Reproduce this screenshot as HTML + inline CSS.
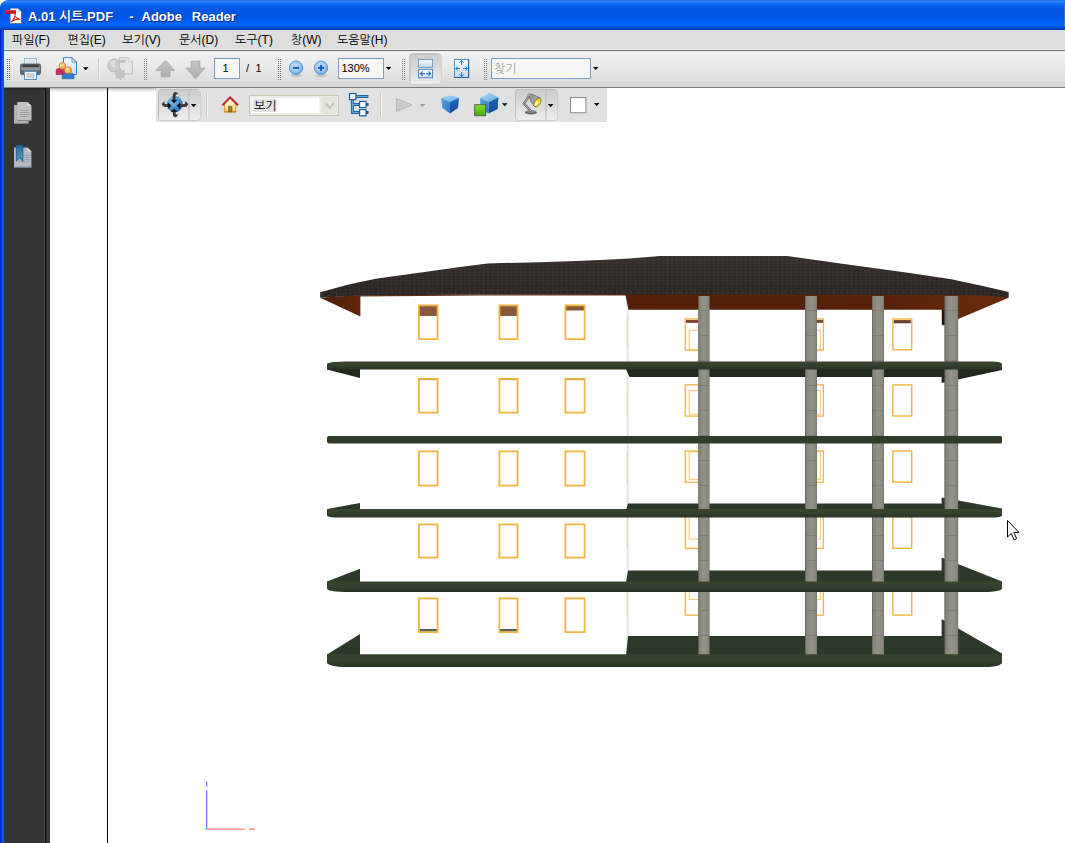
<!DOCTYPE html>
<html><head><meta charset="utf-8"><title>A.01 PDF - Adobe Reader</title>
<style>
html,body{margin:0;padding:0;background:#fff;}
body{width:1065px;height:843px;overflow:hidden;position:relative;font-family:"Liberation Sans",sans-serif;}
.a{position:absolute;}
svg{position:absolute;left:0;top:0;overflow:visible;}

#title{left:0;top:0;width:1065px;height:30px;background:linear-gradient(180deg,#0a50d8 0px,#3a8cf8 1px,#2a84fb 2px,#1272f4 3px,#0564ec 5px,#0058e4 8px,#0054e0 12px,#0055e6 17px,#005cf0 21px,#0465f8 24px,#0460ee 26px,#0050d4 28px,#0040b4 29px,#003aa8 30px);}
#tl{left:0;top:0;width:8px;height:8px;}
#lb{left:0;top:30px;width:4px;height:813px;background:linear-gradient(90deg,#001cd0 0,#0022d6 1px,#0a4cee 2px,#0c58f4 3px,#0a50ea 4px);}
#menu{left:4px;top:30px;width:1061px;height:19px;background:#dedede;}
#menul{left:4px;top:49px;width:1061px;height:1px;background:#efefef;}
#menud{left:4px;top:50px;width:1061px;height:1px;background:#6f6f6f;}
#tb{left:4px;top:51px;width:1061px;height:36px;background:linear-gradient(180deg,#f1f1f1 0,#ebebeb 40%,#dcdcdc 85%,#d4d4d4 100%);}
#tbd{left:4px;top:87px;width:1061px;height:1px;background:#7c7c7c;}
#side{left:4px;top:88px;width:41px;height:755px;background:linear-gradient(180deg,#242424 0,#303030 2px,#343434 4px);}
#sideh{left:44px;top:90px;width:1px;height:753px;background:#4e4e4e;}
#sidel{left:45px;top:88px;width:1px;height:755px;background:#000;}
#sides{left:46px;top:88px;width:4px;height:755px;background:#363636;}
#shadow{left:50px;top:88px;width:106px;height:4px;background:linear-gradient(180deg,rgba(0,0,0,.32),rgba(0,0,0,.12) 45%,rgba(0,0,0,0));}
#pl{left:107px;top:88px;width:1px;height:755px;background:#000;}
#t3{left:156px;top:88px;width:451px;height:34px;background:#e1e1e1;}
#tr{left:1064px;top:5px;width:1px;height:21px;background:#4a72c8;}
.tx{font:11px/13px "Liberation Sans",sans-serif;color:#000;white-space:nowrap;}
</style></head><body>

<div class="a" id="title"></div>
<svg class="a" id="tl" width="8" height="8"><path d="M0 0H7C3 1 1 3 0 7Z" fill="#fff"/></svg>
<div class="a" id="lb"></div>
<div class="a" id="menu"></div><div class="a" id="menul"></div><div class="a" id="menud"></div>
<div class="a" id="tb"></div><div class="a" id="tbd"></div>
<div class="a" id="side"></div><div class="a" id="sideh"></div><div class="a" id="sidel"></div><div class="a" id="sides"></div>
<div class="a" id="pl"></div>
<div class="a" id="shadow"></div>
<div class="a" id="t3"></div><div class="a" id="tr"></div>
<svg width="1065" height="60"><g role="heading" aria-label="A.01 시트.PDF - Adobe Reader" font-family='"Liberation Sans","NanumGothic","Noto Sans CJK KR",sans-serif' font-size="13" font-weight="bold"><text y="22" fill="#0a2a8c"><tspan x="29">A.01 시트.PDF</tspan><tspan x="130.2">-</tspan><tspan x="142.5">Adobe</tspan><tspan x="192.8">Reader</tspan></text><text y="21" fill="#ffffff"><tspan x="28">A.01 시트.PDF</tspan><tspan x="129.2">-</tspan><tspan x="141.5">Adobe</tspan><tspan x="191.8">Reader</tspan></text></g><g font-family='"Liberation Sans","NanumGothic","Noto Sans CJK KR",sans-serif' font-size="12" fill="#000"><g role="menuitem" aria-label="파일(F)"><text x="12" y="44">파일(F)</text></g><g role="menuitem" aria-label="편집(E)"><text x="67.3" y="44">편집(E)</text></g><g role="menuitem" aria-label="보기(V)"><text x="122.3" y="44">보기(V)</text></g><g role="menuitem" aria-label="문서(D)"><text x="179" y="44">문서(D)</text></g><g role="menuitem" aria-label="도구(T)"><text x="235" y="44">도구(T)</text></g><g role="menuitem" aria-label="창(W)"><text x="291" y="44">창(W)</text></g><g role="menuitem" aria-label="도움말(H)"><text x="337" y="44">도움말(H)</text></g></g></svg>

<svg width="1065" height="843"><defs>
<linearGradient id="colg" x1="0" x2="1" y1="0" y2="0"><stop offset="0" stop-color="#5c5c54"/><stop offset=".12" stop-color="#85857c"/><stop offset=".5" stop-color="#939389"/><stop offset=".9" stop-color="#87877e"/><stop offset="1" stop-color="#74746c"/></linearGradient>
<linearGradient id="roofg" x1="0" x2="0" y1="0" y2="1"><stop offset="0" stop-color="#383230"/><stop offset=".5" stop-color="#322c2a"/><stop offset="1" stop-color="#2c2625"/></linearGradient>
<linearGradient id="brg" x1="0" x2="1" y1="0" y2="0"><stop offset="0" stop-color="#4c1c06"/><stop offset="1" stop-color="#63270a"/></linearGradient>
<linearGradient id="brg2" x1="0" x2="1" y1="0" y2="0"><stop offset="0" stop-color="#521f07"/><stop offset=".7" stop-color="#58220a"/><stop offset="1" stop-color="#6c2c0d"/></linearGradient>
<linearGradient id="frg" x1="0" x2="0" y1="0" y2="1"><stop offset="0" stop-color="#37452f"/><stop offset=".55" stop-color="#33402c"/><stop offset="1" stop-color="#293324"/></linearGradient>
<pattern id="shingle" width="4.6" height="3" patternUnits="userSpaceOnUse"><rect x="0" y="0" width="1" height="3" fill="#fff" opacity=".035"/><rect x="0" y="0" width="4.6" height=".8" fill="#000" opacity=".10"/></pattern>
<clipPath id="roofclip"><path id="roofp" d="M320.2 292.2L347.6 284.7L375.7 278.7L422.7 272.2L460.2 266.9L487.5 263.4L530 262.4L570 261.3L600 260L630 258.5L660 256H787L847.6 264.6L906.2 272.5L951.3 279.3L982.8 286.1L1008.7 292.1V297.8L985 295.6L940 294.8L780 294.3L480 294.5L360 295.6L320.2 297.8Z"/></clipPath>
</defs><rect x="626.6" y="300" width="2.2" height="356" fill="#e6e6e6"/><rect x="628.6" y="300" width="0.8" height="356" fill="#f3f3f3"/><rect x="419" y="306.0" width="18.5" height="10" fill="#87583c"/><rect x="418.9" y="305.4" width="18.7" height="33.7" fill="none" stroke="#f2b441" stroke-width="1.8"/><rect x="499.5" y="306.0" width="18.0" height="10" fill="#87583c"/><rect x="499.4" y="305.4" width="18.2" height="33.7" fill="none" stroke="#f2b441" stroke-width="1.8"/><rect x="565.5" y="306.0" width="19.0" height="4.5" fill="#87583c"/><rect x="565.4" y="305.4" width="19.2" height="33.7" fill="none" stroke="#f2b441" stroke-width="1.8"/><rect x="419" y="378.5" width="18.5" height="1.6" fill="#6a5a48" opacity=".8"/><rect x="418.9" y="378.9" width="18.7" height="33.7" fill="none" stroke="#f2b441" stroke-width="1.8"/><rect x="499.5" y="378.5" width="18.0" height="1.6" fill="#6a5a48" opacity=".8"/><rect x="499.4" y="378.9" width="18.2" height="33.7" fill="none" stroke="#f2b441" stroke-width="1.8"/><rect x="565.5" y="378.5" width="19.0" height="1.6" fill="#6a5a48" opacity=".8"/><rect x="565.4" y="378.9" width="19.2" height="33.7" fill="none" stroke="#f2b441" stroke-width="1.8"/><rect x="418.9" y="451.4" width="18.7" height="34.2" fill="none" stroke="#f2b441" stroke-width="1.8"/><rect x="499.4" y="451.4" width="18.2" height="34.2" fill="none" stroke="#f2b441" stroke-width="1.8"/><rect x="565.4" y="451.4" width="19.2" height="34.2" fill="none" stroke="#f2b441" stroke-width="1.8"/><rect x="418.9" y="524.4" width="18.7" height="33.2" fill="none" stroke="#f2b441" stroke-width="1.8"/><rect x="499.4" y="524.4" width="18.2" height="33.2" fill="none" stroke="#f2b441" stroke-width="1.8"/><rect x="565.4" y="524.4" width="19.2" height="33.2" fill="none" stroke="#f2b441" stroke-width="1.8"/><rect x="419" y="629" width="18.5" height="2.6" fill="#566060"/><rect x="418.9" y="598.4" width="18.7" height="33.7" fill="none" stroke="#f2b441" stroke-width="1.8"/><rect x="499.5" y="629" width="18.0" height="2.6" fill="#566060"/><rect x="499.4" y="598.4" width="18.2" height="33.7" fill="none" stroke="#f2b441" stroke-width="1.8"/><rect x="565.4" y="598.4" width="19.2" height="33.7" fill="none" stroke="#f2b441" stroke-width="1.8"/><rect x="689.2" y="330.3" width="16" height="19.69999999999999" fill="none" stroke="#f6cc7c" stroke-width="1.1"/><rect x="808" y="330.3" width="12.4" height="19.69999999999999" fill="none" stroke="#f6cc7c" stroke-width="1.1"/><rect x="685.2" y="318.90000000000003" width="20" height="30.99999999999999" fill="none" stroke="#f2b441" stroke-width="1.3"/><rect x="808" y="318.90000000000003" width="15.4" height="30.99999999999999" fill="none" stroke="#f2b441" stroke-width="1.3"/><rect x="892.9" y="319.0" width="18.8" height="30.79999999999999" fill="none" stroke="#f2b441" stroke-width="1.4"/><rect x="686" y="319.90000000000003" width="12" height="3" fill="#7a4a30"/><rect x="817" y="319.90000000000003" width="6" height="3" fill="#7a4a30"/><rect x="893.8" y="320.1" width="17" height="3.2" fill="#6e4028"/><rect x="689.2" y="390.3" width="16" height="23.899999999999977" fill="none" stroke="#f6cc7c" stroke-width="1.1"/><rect x="808" y="390.3" width="12.4" height="23.899999999999977" fill="none" stroke="#f6cc7c" stroke-width="1.1"/><rect x="685.2" y="384.8" width="20" height="31.3" fill="none" stroke="#f2b441" stroke-width="1.3"/><rect x="808" y="384.8" width="15.4" height="31.3" fill="none" stroke="#f2b441" stroke-width="1.3"/><rect x="892.9" y="384.9" width="18.8" height="31.1" fill="none" stroke="#f2b441" stroke-width="1.4"/><rect x="689.2" y="451.9" width="16" height="27.400000000000034" fill="none" stroke="#f6cc7c" stroke-width="1.1"/><rect x="808" y="451.9" width="12.4" height="27.400000000000034" fill="none" stroke="#f6cc7c" stroke-width="1.1"/><rect x="685.2" y="451.0" width="20" height="31.200000000000035" fill="none" stroke="#f2b441" stroke-width="1.3"/><rect x="808" y="451.0" width="15.4" height="31.200000000000035" fill="none" stroke="#f2b441" stroke-width="1.3"/><rect x="892.9" y="451.09999999999997" width="18.8" height="31.000000000000036" fill="none" stroke="#f2b441" stroke-width="1.4"/><rect x="689.2" y="512.5" width="16" height="26.600000000000023" fill="none" stroke="#f6cc7c" stroke-width="1.1"/><rect x="808" y="512.5" width="12.4" height="26.600000000000023" fill="none" stroke="#f6cc7c" stroke-width="1.1"/><rect x="685.2" y="516.6" width="20" height="31.8" fill="none" stroke="#f2b441" stroke-width="1.3"/><rect x="808" y="516.6" width="15.4" height="31.8" fill="none" stroke="#f2b441" stroke-width="1.3"/><rect x="892.9" y="516.7" width="18.8" height="31.6" fill="none" stroke="#f2b441" stroke-width="1.4"/><rect x="689.2" y="572.5" width="16" height="27" fill="none" stroke="#f6cc7c" stroke-width="1.1"/><rect x="808" y="572.5" width="12.4" height="27" fill="none" stroke="#f6cc7c" stroke-width="1.1"/><rect x="685.2" y="583.6" width="20" height="31.599999999999955" fill="none" stroke="#f2b441" stroke-width="1.3"/><rect x="808" y="583.6" width="15.4" height="31.599999999999955" fill="none" stroke="#f2b441" stroke-width="1.3"/><rect x="892.9" y="583.7" width="18.8" height="31.399999999999956" fill="none" stroke="#f2b441" stroke-width="1.4"/><rect x="626.8" y="318" width="1" height="32" fill="#f2b441" opacity=".35"/><rect x="626.8" y="385" width="1" height="32" fill="#f2b441" opacity=".35"/><rect x="626.8" y="451" width="1" height="32" fill="#f2b441" opacity=".35"/><rect x="626.8" y="517" width="1" height="32" fill="#f2b441" opacity=".35"/><rect x="626.8" y="586" width="1" height="30" fill="#f2b441" opacity=".35"/><path d="M327 369.4L360 378V369H626L629.5 377H941.6V383L1002 370V366H327Z" fill="#212a1c"/><path d="M327 509L360 503V510H626L628 503.5H941.6V497.6L1002 508.6V512H327Z" fill="#2d3928"/><path d="M327 581.6L360 568.8V582.6H626L628 570.6H941.6V557.6L1002 581.6V584.6H327Z" fill="#2d3928"/><path d="M327 654.4L360 634V655.4H626L628 636H941.6V619L1002 653.6V657.4H327Z" fill="#2d3928"/><polygon points="320.2,297.8 360.4,295 360.4,316.4" fill="url(#brg)" /><polygon points="625.3,294 1000,294 1008.7,297.8 944,325 944,309.7 628.4,309.7" fill="url(#brg2)" /><rect x="941.8" y="309.4" width="2.6" height="15.8" fill="#2a1206"/><rect x="698.2" y="296" width="11.399999999999977" height="360" fill="url(#colg)"/><rect x="699.2" y="310" width="9.899999999999977" height="0.9" fill="#66665e" opacity=".4"/><rect x="699.2" y="335" width="9.899999999999977" height="0.9" fill="#66665e" opacity=".4"/><rect x="699.2" y="360" width="9.899999999999977" height="0.9" fill="#66665e" opacity=".4"/><rect x="699.2" y="385" width="9.899999999999977" height="0.9" fill="#66665e" opacity=".4"/><rect x="699.2" y="410" width="9.899999999999977" height="0.9" fill="#66665e" opacity=".4"/><rect x="699.2" y="435" width="9.899999999999977" height="0.9" fill="#66665e" opacity=".4"/><rect x="699.2" y="460" width="9.899999999999977" height="0.9" fill="#66665e" opacity=".4"/><rect x="699.2" y="485" width="9.899999999999977" height="0.9" fill="#66665e" opacity=".4"/><rect x="699.2" y="510" width="9.899999999999977" height="0.9" fill="#66665e" opacity=".4"/><rect x="699.2" y="535" width="9.899999999999977" height="0.9" fill="#66665e" opacity=".4"/><rect x="699.2" y="560" width="9.899999999999977" height="0.9" fill="#66665e" opacity=".4"/><rect x="699.2" y="585" width="9.899999999999977" height="0.9" fill="#66665e" opacity=".4"/><rect x="699.2" y="610" width="9.899999999999977" height="0.9" fill="#66665e" opacity=".4"/><rect x="699.2" y="635" width="9.899999999999977" height="0.9" fill="#66665e" opacity=".4"/><rect x="805" y="296" width="12" height="360" fill="url(#colg)"/><rect x="806" y="310" width="10.5" height="0.9" fill="#66665e" opacity=".4"/><rect x="806" y="335" width="10.5" height="0.9" fill="#66665e" opacity=".4"/><rect x="806" y="360" width="10.5" height="0.9" fill="#66665e" opacity=".4"/><rect x="806" y="385" width="10.5" height="0.9" fill="#66665e" opacity=".4"/><rect x="806" y="410" width="10.5" height="0.9" fill="#66665e" opacity=".4"/><rect x="806" y="435" width="10.5" height="0.9" fill="#66665e" opacity=".4"/><rect x="806" y="460" width="10.5" height="0.9" fill="#66665e" opacity=".4"/><rect x="806" y="485" width="10.5" height="0.9" fill="#66665e" opacity=".4"/><rect x="806" y="510" width="10.5" height="0.9" fill="#66665e" opacity=".4"/><rect x="806" y="535" width="10.5" height="0.9" fill="#66665e" opacity=".4"/><rect x="806" y="560" width="10.5" height="0.9" fill="#66665e" opacity=".4"/><rect x="806" y="585" width="10.5" height="0.9" fill="#66665e" opacity=".4"/><rect x="806" y="610" width="10.5" height="0.9" fill="#66665e" opacity=".4"/><rect x="806" y="635" width="10.5" height="0.9" fill="#66665e" opacity=".4"/><rect x="872" y="296" width="12" height="360" fill="url(#colg)"/><rect x="873" y="310" width="10.5" height="0.9" fill="#66665e" opacity=".4"/><rect x="873" y="335" width="10.5" height="0.9" fill="#66665e" opacity=".4"/><rect x="873" y="360" width="10.5" height="0.9" fill="#66665e" opacity=".4"/><rect x="873" y="385" width="10.5" height="0.9" fill="#66665e" opacity=".4"/><rect x="873" y="410" width="10.5" height="0.9" fill="#66665e" opacity=".4"/><rect x="873" y="435" width="10.5" height="0.9" fill="#66665e" opacity=".4"/><rect x="873" y="460" width="10.5" height="0.9" fill="#66665e" opacity=".4"/><rect x="873" y="485" width="10.5" height="0.9" fill="#66665e" opacity=".4"/><rect x="873" y="510" width="10.5" height="0.9" fill="#66665e" opacity=".4"/><rect x="873" y="535" width="10.5" height="0.9" fill="#66665e" opacity=".4"/><rect x="873" y="560" width="10.5" height="0.9" fill="#66665e" opacity=".4"/><rect x="873" y="585" width="10.5" height="0.9" fill="#66665e" opacity=".4"/><rect x="873" y="610" width="10.5" height="0.9" fill="#66665e" opacity=".4"/><rect x="873" y="635" width="10.5" height="0.9" fill="#66665e" opacity=".4"/><rect x="944.4" y="296" width="13.800000000000068" height="360" fill="url(#colg)"/><rect x="945.4" y="310" width="12.300000000000068" height="0.9" fill="#66665e" opacity=".4"/><rect x="945.4" y="335" width="12.300000000000068" height="0.9" fill="#66665e" opacity=".4"/><rect x="945.4" y="360" width="12.300000000000068" height="0.9" fill="#66665e" opacity=".4"/><rect x="945.4" y="385" width="12.300000000000068" height="0.9" fill="#66665e" opacity=".4"/><rect x="945.4" y="410" width="12.300000000000068" height="0.9" fill="#66665e" opacity=".4"/><rect x="945.4" y="435" width="12.300000000000068" height="0.9" fill="#66665e" opacity=".4"/><rect x="945.4" y="460" width="12.300000000000068" height="0.9" fill="#66665e" opacity=".4"/><rect x="945.4" y="485" width="12.300000000000068" height="0.9" fill="#66665e" opacity=".4"/><rect x="945.4" y="510" width="12.300000000000068" height="0.9" fill="#66665e" opacity=".4"/><rect x="945.4" y="535" width="12.300000000000068" height="0.9" fill="#66665e" opacity=".4"/><rect x="945.4" y="560" width="12.300000000000068" height="0.9" fill="#66665e" opacity=".4"/><rect x="945.4" y="585" width="12.300000000000068" height="0.9" fill="#66665e" opacity=".4"/><rect x="945.4" y="610" width="12.300000000000068" height="0.9" fill="#66665e" opacity=".4"/><rect x="945.4" y="635" width="12.300000000000068" height="0.9" fill="#66665e" opacity=".4"/><path d="M320.2 292.2L347.6 284.7L375.7 278.7L422.7 272.2L460.2 266.9L487.5 263.4L530 262.4L570 261.3L600 260L630 258.5L660 256H787L847.6 264.6L906.2 272.5L951.3 279.3L982.8 286.1L1008.7 292.1V297.8L985 295.6L940 294.8L780 294.3L480 294.5L360 295.6L320.2 297.8Z" fill="url(#roofg)"/><rect x="318" y="254" width="694" height="45" fill="url(#shingle)" clip-path="url(#roofclip)"/><path d="M322 295.2L360 293.2L480 292.2L780 292L940 292.4L1004 294.6" fill="none" stroke="#4a4240" stroke-width="1.2" stroke-dasharray="1.6 5.4" opacity=".7"/><path d="M360 295.2L480 294.2L626 294.1V295.4L480 295.5L360 296.4Z" fill="#5a2a12"/><path d="M327 364.0Q327.2 361.79999999999995 345 361.4H992Q1001.6 361.7 1002 364.0V369.5H327Z" fill="url(#frg)"/><path d="M329 436H1000.5Q1002 436 1002 437.5V441.9Q1002 443.4 1000.5 443.4H329Q327 443.4 327 441.6V437.8Q327 436 329 436Z" fill="#303c2a"/><path d="M327 509H1002V515.6Q1001.6 517.2 995 517.6H335Q327.4 517.2 327 515.6Z" fill="url(#frg)"/><path d="M327 581.6H1002V588.6Q1001.6 591.6 988 592H344Q327.4 591.6 327 588.6Z" fill="url(#frg)"/><path d="M327 654.2H1002V662.4Q1001.6 666.6 985 667H348Q327.4 666.6 327 662.4Z" fill="url(#frg)"/><rect x="206" y="781.5" width="1.3" height="5" fill="#7878ff"/><rect x="206" y="790.5" width="1.3" height="38.5" fill="#7878ff"/><rect x="207.5" y="828.6" width="37.5" height="1.1" fill="#ff6a6a"/><rect x="249" y="828.6" width="6" height="1.1" fill="#ff6a6a"/><rect x="204.8" y="828.4" width="3.4" height="1.4" fill="#60f060"/><path d="M1007.5 520.5V537L1011.3 533.4L1014 539.8L1016.6 538.7L1013.9 532.4H1019Z" fill="#fff" stroke="#000" stroke-width="1" stroke-linejoin="miter"/></svg>
<svg width="1065" height="200"><defs>
<linearGradient id="gBtn" x1="0" x2="0" y1="0" y2="1"><stop offset="0" stop-color="#cbcbcb"/><stop offset=".5" stop-color="#dcdcdc"/><stop offset="1" stop-color="#eeeeee"/></linearGradient>
<radialGradient id="gZoom" cx=".45" cy=".4" r=".65"><stop offset="0" stop-color="#cfe6f8"/><stop offset=".55" stop-color="#9cc8ee"/><stop offset="1" stop-color="#5e9fe0"/></radialGradient>
<linearGradient id="gPg" x1="0" x2="0" y1="0" y2="1"><stop offset="0" stop-color="#fbfdff"/><stop offset="1" stop-color="#c4d8ec"/></linearGradient>
<linearGradient id="gCubeT" x1="0" x2="1" y1="0" y2="1"><stop offset="0" stop-color="#a8d4f4"/><stop offset="1" stop-color="#6cb0e4"/></linearGradient>
<linearGradient id="gCubeL" x1="0" x2="1" y1="0" y2="1"><stop offset="0" stop-color="#5ca4e0"/><stop offset="1" stop-color="#2a78c8"/></linearGradient>
<linearGradient id="gCubeR" x1="0" x2="0" y1="0" y2="1"><stop offset="0" stop-color="#2468b8"/><stop offset="1" stop-color="#124c98"/></linearGradient>
<linearGradient id="gGreen" x1="0" x2="0" y1="0" y2="1"><stop offset="0" stop-color="#86ea1c"/><stop offset="1" stop-color="#44a808"/></linearGradient>
<linearGradient id="gHouse" x1="0" x2="0" y1="0" y2="1"><stop offset="0" stop-color="#fff6c8"/><stop offset="1" stop-color="#f6cc58"/></linearGradient>
<radialGradient id="gBall" cx=".35" cy=".3" r=".8"><stop offset="0" stop-color="#8cc4ec"/><stop offset=".5" stop-color="#4a94cc"/><stop offset="1" stop-color="#2a6ca8"/></radialGradient>
<radialGradient id="gHead" cx=".4" cy=".35" r=".7"><stop offset="0" stop-color="#ffe0a8"/><stop offset=".6" stop-color="#f8b45c"/><stop offset="1" stop-color="#d88830"/></radialGradient>
<linearGradient id="gRib" x1="0" x2="0" y1="0" y2="1"><stop offset="0" stop-color="#2c6c9c"/><stop offset="1" stop-color="#5a94bc"/></linearGradient>
<linearGradient id="gArr" x1="0" x2="0" y1="0" y2="1"><stop offset="0" stop-color="#c4c4c4"/><stop offset="1" stop-color="#b0b0b0"/></linearGradient>
</defs><rect x="7" y="59" width="1" height="1" fill="#7e7e7e"/><rect x="9" y="59" width="1" height="1" fill="#7e7e7e"/><rect x="7" y="61" width="1" height="1" fill="#7e7e7e"/><rect x="9" y="61" width="1" height="1" fill="#7e7e7e"/><rect x="7" y="63" width="1" height="1" fill="#7e7e7e"/><rect x="9" y="63" width="1" height="1" fill="#7e7e7e"/><rect x="7" y="65" width="1" height="1" fill="#7e7e7e"/><rect x="9" y="65" width="1" height="1" fill="#7e7e7e"/><rect x="7" y="67" width="1" height="1" fill="#7e7e7e"/><rect x="9" y="67" width="1" height="1" fill="#7e7e7e"/><rect x="7" y="69" width="1" height="1" fill="#7e7e7e"/><rect x="9" y="69" width="1" height="1" fill="#7e7e7e"/><rect x="7" y="71" width="1" height="1" fill="#7e7e7e"/><rect x="9" y="71" width="1" height="1" fill="#7e7e7e"/><rect x="7" y="73" width="1" height="1" fill="#7e7e7e"/><rect x="9" y="73" width="1" height="1" fill="#7e7e7e"/><rect x="7" y="75" width="1" height="1" fill="#7e7e7e"/><rect x="9" y="75" width="1" height="1" fill="#7e7e7e"/><rect x="7" y="77" width="1" height="1" fill="#7e7e7e"/><rect x="9" y="77" width="1" height="1" fill="#7e7e7e"/><rect x="7" y="79" width="1" height="1" fill="#7e7e7e"/><rect x="9" y="79" width="1" height="1" fill="#7e7e7e"/><g>
<rect x="24.5" y="58.5" width="12" height="7" fill="#eef1f3" stroke="#86c2d6"/>
<rect x="26" y="60" width="9" height="4" fill="#e2e4e6"/>
<rect x="20.5" y="64" width="20" height="10.5" rx="1.2" fill="#74787c" stroke="#50545a" stroke-width=".8"/>
<rect x="22.5" y="64.6" width="16" height="2.6" fill="#3c4044"/>
<rect x="21.2" y="67.4" width="18.6" height="3.2" fill="#94989c"/>
<rect x="21.2" y="70.6" width="18.6" height="3.4" fill="#5e6266"/>
<rect x="24.5" y="71.5" width="12" height="8" fill="#f6f8fa" stroke="#5a94c4"/>
<rect x="26.5" y="73.6" width="8" height="1" fill="#a8acb0"/><rect x="26.5" y="75.6" width="8" height="1" fill="#a8acb0"/><rect x="26.5" y="77.4" width="8" height=".8" fill="#b8bcc0"/>
</g><g>
<path d="M63.5 57.7H72L76.5 62.2V74.5H63.5Z" fill="url(#gPg)" stroke="#3c7cc8"/>
<path d="M72 57.7V62.2H76.5Z" fill="#dceaf8" stroke="#3c7cc8" stroke-width=".8"/>
<path d="M56.2 74.6V70.6Q56.2 68.6 58.4 68.6H64.2Q66 68.6 66 70.6V74.6Z" fill="#c82c5c" stroke="#9c1c44" stroke-width=".6"/>
<circle cx="62.4" cy="66" r="3.4" fill="url(#gHead)" stroke="#b87838" stroke-width=".6"/>
<path d="M62.2 78.8V75.4Q62.2 73.4 64.4 73.4H71.8Q74 73.4 74 75.4V78.8Z" fill="#2c7ccc" stroke="#1c5ca4" stroke-width=".6"/>
<circle cx="68" cy="70.2" r="3.6" fill="url(#gHead)" stroke="#b87838" stroke-width=".6"/>
</g><path d="M82.9 67.2H88.5L85.7 70.3Z" fill="#000"/><rect x="98" y="58.5" width="1" height="21.5" fill="#cdc8b8"/><rect x="99" y="58.5" width="1" height="21.5" fill="#f4f4f4"/><g opacity=".9">
<circle cx="114.5" cy="65.5" r="6.6" fill="#c8c8c8" stroke="#b6b6b6"/>
<path d="M110 62Q113 59.5 116 61.5Q114 64 116 66.5Q113 69 111.5 66Z" fill="#dcdcdc"/>
<path d="M119.5 57.8H128.5L132.4 61.7V74H119.5Z" fill="#e6e6e6" stroke="#bcbcbc"/>
<path d="M128.5 57.8V61.7H132.4Z" fill="#f0f0f0" stroke="#c4c4c4" stroke-width=".7"/>
<rect x="118" y="60" width="7.5" height="2.8" fill="#bcbcbc"/>
<path d="M120.3 68.2L121.8 70.6L124.5 69.9L123.8 72.6L126.2 74L123.8 75.4L124.5 78.1L121.8 77.4L120.3 79.8L118.8 77.4L116.1 78.1L116.8 75.4L114.4 74L116.8 72.6L116.1 69.9L118.8 70.6Z" fill="#c0c0c0" stroke="#b2b2b2" stroke-width=".5"/>
</g><rect x="144" y="59" width="1" height="1" fill="#7e7e7e"/><rect x="146" y="59" width="1" height="1" fill="#7e7e7e"/><rect x="144" y="61" width="1" height="1" fill="#7e7e7e"/><rect x="146" y="61" width="1" height="1" fill="#7e7e7e"/><rect x="144" y="63" width="1" height="1" fill="#7e7e7e"/><rect x="146" y="63" width="1" height="1" fill="#7e7e7e"/><rect x="144" y="65" width="1" height="1" fill="#7e7e7e"/><rect x="146" y="65" width="1" height="1" fill="#7e7e7e"/><rect x="144" y="67" width="1" height="1" fill="#7e7e7e"/><rect x="146" y="67" width="1" height="1" fill="#7e7e7e"/><rect x="144" y="69" width="1" height="1" fill="#7e7e7e"/><rect x="146" y="69" width="1" height="1" fill="#7e7e7e"/><rect x="144" y="71" width="1" height="1" fill="#7e7e7e"/><rect x="146" y="71" width="1" height="1" fill="#7e7e7e"/><rect x="144" y="73" width="1" height="1" fill="#7e7e7e"/><rect x="146" y="73" width="1" height="1" fill="#7e7e7e"/><rect x="144" y="75" width="1" height="1" fill="#7e7e7e"/><rect x="146" y="75" width="1" height="1" fill="#7e7e7e"/><rect x="144" y="77" width="1" height="1" fill="#7e7e7e"/><rect x="146" y="77" width="1" height="1" fill="#7e7e7e"/><rect x="144" y="79" width="1" height="1" fill="#7e7e7e"/><rect x="146" y="79" width="1" height="1" fill="#7e7e7e"/><path d="M165.4 60.4L174.8 70.4H170V76.8H161.2V70.4H156Z" fill="url(#gArr)" stroke="#a6a6a6" stroke-width=".8"/><path d="M191.2 61.2H199.8V68.2H205L195.5 78.8L186 68.2H191.2Z" fill="url(#gArr)" stroke="#a6a6a6" stroke-width=".8"/><rect x="214.5" y="58.5" width="25" height="20" fill="#f6f6f6" stroke="#7a9cc6"/><rect x="278" y="59" width="1" height="1" fill="#7e7e7e"/><rect x="280" y="59" width="1" height="1" fill="#7e7e7e"/><rect x="278" y="61" width="1" height="1" fill="#7e7e7e"/><rect x="280" y="61" width="1" height="1" fill="#7e7e7e"/><rect x="278" y="63" width="1" height="1" fill="#7e7e7e"/><rect x="280" y="63" width="1" height="1" fill="#7e7e7e"/><rect x="278" y="65" width="1" height="1" fill="#7e7e7e"/><rect x="280" y="65" width="1" height="1" fill="#7e7e7e"/><rect x="278" y="67" width="1" height="1" fill="#7e7e7e"/><rect x="280" y="67" width="1" height="1" fill="#7e7e7e"/><rect x="278" y="69" width="1" height="1" fill="#7e7e7e"/><rect x="280" y="69" width="1" height="1" fill="#7e7e7e"/><rect x="278" y="71" width="1" height="1" fill="#7e7e7e"/><rect x="280" y="71" width="1" height="1" fill="#7e7e7e"/><rect x="278" y="73" width="1" height="1" fill="#7e7e7e"/><rect x="280" y="73" width="1" height="1" fill="#7e7e7e"/><rect x="278" y="75" width="1" height="1" fill="#7e7e7e"/><rect x="280" y="75" width="1" height="1" fill="#7e7e7e"/><rect x="278" y="77" width="1" height="1" fill="#7e7e7e"/><rect x="280" y="77" width="1" height="1" fill="#7e7e7e"/><rect x="278" y="79" width="1" height="1" fill="#7e7e7e"/><rect x="280" y="79" width="1" height="1" fill="#7e7e7e"/><ellipse cx="296.5" cy="75.6" rx="6" ry="1.6" fill="#000" opacity=".12"/><circle cx="296" cy="67.8" r="6.7" fill="url(#gZoom)" stroke="#5c98d8" stroke-width="1"/><rect x="293" y="66.9" width="6" height="2" fill="#1a5cb8"/><ellipse cx="321.5" cy="75.6" rx="6" ry="1.6" fill="#000" opacity=".12"/><circle cx="321" cy="67.8" r="6.7" fill="url(#gZoom)" stroke="#5c98d8" stroke-width="1"/><rect x="318" y="66.9" width="6" height="2" fill="#1a5cb8"/><rect x="320" y="64.9" width="2" height="6" fill="#1a5cb8"/><rect x="338.5" y="58.5" width="45" height="20" fill="#f6f6f6" stroke="#7a9cc6"/><path d="M385.8 67H391.40000000000003L388.6 70.1Z" fill="#000"/><rect x="402" y="59" width="1" height="1" fill="#7e7e7e"/><rect x="404" y="59" width="1" height="1" fill="#7e7e7e"/><rect x="402" y="61" width="1" height="1" fill="#7e7e7e"/><rect x="404" y="61" width="1" height="1" fill="#7e7e7e"/><rect x="402" y="63" width="1" height="1" fill="#7e7e7e"/><rect x="404" y="63" width="1" height="1" fill="#7e7e7e"/><rect x="402" y="65" width="1" height="1" fill="#7e7e7e"/><rect x="404" y="65" width="1" height="1" fill="#7e7e7e"/><rect x="402" y="67" width="1" height="1" fill="#7e7e7e"/><rect x="404" y="67" width="1" height="1" fill="#7e7e7e"/><rect x="402" y="69" width="1" height="1" fill="#7e7e7e"/><rect x="404" y="69" width="1" height="1" fill="#7e7e7e"/><rect x="402" y="71" width="1" height="1" fill="#7e7e7e"/><rect x="404" y="71" width="1" height="1" fill="#7e7e7e"/><rect x="402" y="73" width="1" height="1" fill="#7e7e7e"/><rect x="404" y="73" width="1" height="1" fill="#7e7e7e"/><rect x="402" y="75" width="1" height="1" fill="#7e7e7e"/><rect x="404" y="75" width="1" height="1" fill="#7e7e7e"/><rect x="402" y="77" width="1" height="1" fill="#7e7e7e"/><rect x="404" y="77" width="1" height="1" fill="#7e7e7e"/><rect x="402" y="79" width="1" height="1" fill="#7e7e7e"/><rect x="404" y="79" width="1" height="1" fill="#7e7e7e"/><rect x="409.8" y="53.5" width="31.5" height="31" rx="3.2" fill="url(#gBtn)" stroke="#d0d0d0"/><path d="M410.2 81V56.5Q410.2 53.9 413 53.9H438.5" fill="none" stroke="#bebebe"/><g>
<rect x="418.5" y="59.4" width="14" height="8" fill="url(#gPg)" stroke="#5c9cd4" stroke-width=".9"/>
<rect x="418.5" y="69.4" width="14" height="8.4" fill="url(#gPg)" stroke="#3c84c8" stroke-width=".9"/>
<path d="M420.4 73.6H430.6M422.6 71.4L420.4 73.6L422.6 75.8M428.4 71.4L430.6 73.6L428.4 75.8" fill="none" stroke="#2a78c0" stroke-width="1.1"/>
<rect x="424.8" y="72.8" width="1.4" height="1.6" fill="#eef4fa"/>
</g><g>
<rect x="454.5" y="59.4" width="14.2" height="18" fill="url(#gPg)" stroke="#3c84c8" stroke-width=".9"/>
<path d="M468.6 60V77.5H454.5" fill="none" stroke="#1c5ca0" stroke-width=".9"/>
<path d="M461.6 60.6V65M459.6 62.6L461.6 60.6L463.6 62.6M461.6 76.4V72M459.6 74.4L461.6 76.4L463.6 74.4M455.8 68.5H460M457.8 66.5L455.8 68.5L457.8 70.5M467.4 68.5H463.2M465.4 66.5L467.4 68.5L465.4 70.5" fill="none" stroke="#2a78c0" stroke-width="1"/>
</g><rect x="484" y="59" width="1" height="1" fill="#7e7e7e"/><rect x="486" y="59" width="1" height="1" fill="#7e7e7e"/><rect x="484" y="61" width="1" height="1" fill="#7e7e7e"/><rect x="486" y="61" width="1" height="1" fill="#7e7e7e"/><rect x="484" y="63" width="1" height="1" fill="#7e7e7e"/><rect x="486" y="63" width="1" height="1" fill="#7e7e7e"/><rect x="484" y="65" width="1" height="1" fill="#7e7e7e"/><rect x="486" y="65" width="1" height="1" fill="#7e7e7e"/><rect x="484" y="67" width="1" height="1" fill="#7e7e7e"/><rect x="486" y="67" width="1" height="1" fill="#7e7e7e"/><rect x="484" y="69" width="1" height="1" fill="#7e7e7e"/><rect x="486" y="69" width="1" height="1" fill="#7e7e7e"/><rect x="484" y="71" width="1" height="1" fill="#7e7e7e"/><rect x="486" y="71" width="1" height="1" fill="#7e7e7e"/><rect x="484" y="73" width="1" height="1" fill="#7e7e7e"/><rect x="486" y="73" width="1" height="1" fill="#7e7e7e"/><rect x="484" y="75" width="1" height="1" fill="#7e7e7e"/><rect x="486" y="75" width="1" height="1" fill="#7e7e7e"/><rect x="484" y="77" width="1" height="1" fill="#7e7e7e"/><rect x="486" y="77" width="1" height="1" fill="#7e7e7e"/><rect x="484" y="79" width="1" height="1" fill="#7e7e7e"/><rect x="486" y="79" width="1" height="1" fill="#7e7e7e"/><rect x="491.5" y="58.5" width="99" height="20" fill="#f6f6f6" stroke="#7a9cc6"/><path d="M592.9 67H598.5L595.6999999999999 70.1Z" fill="#000"/><rect x="158.5" y="89.5" width="42.0" height="31" rx="3" fill="url(#gBtn)" stroke="#cdcdcd"/><path d="M158.5 118V92.5Q158.5 89.5 161.5 89.5H197.5" fill="none" stroke="#bdbdbd"/><rect x="188.3" y="90" width="1.3" height="30.4" fill="#c2c2c2"/><g>
<circle cx="174.8" cy="104.3" r="8" fill="url(#gBall)"/>
<g fill="none" stroke="#3a3a3a" stroke-width="2.7" stroke-linecap="round">
<path d="M177.2 95.6Q176.4 93 174.9 93.4Q174 93.8 174.1 96V100.4"/>
<path d="M165.8 102.8Q163.2 103 163.4 104.6Q163.8 105.8 166 105.7H168.6"/>
<path d="M183.8 102.8Q186.8 103 186.6 104.6Q186.2 105.8 184 105.7H179.8"/>
<path d="M177 113.2Q176.4 116 174.9 115.8Q174 115.4 174.1 113.4V111.4"/>
</g>
<path d="M171.2 100.2H176.9L174.1 102.9Z" fill="#0c0c0c" stroke="#0c0c0c" stroke-width=".6" stroke-linejoin="round"/>
<path d="M171.2 111.6H176.9L174.1 109Z" fill="#0c0c0c" stroke="#0c0c0c" stroke-width=".6" stroke-linejoin="round"/>
<path d="M168.3 103V108.4L171 105.7Z" fill="#0c0c0c" stroke="#0c0c0c" stroke-width=".6" stroke-linejoin="round"/>
<path d="M179.9 103V108.4L177.1 105.7Z" fill="#0c0c0c" stroke="#0c0c0c" stroke-width=".6" stroke-linejoin="round"/>
<circle cx="177.3" cy="95.5" r="1.2" fill="#f6f6f6"/><circle cx="165.7" cy="102.8" r="1.2" fill="#f6f6f6"/><circle cx="183.9" cy="102.8" r="1.2" fill="#f6f6f6"/><circle cx="177.1" cy="113.2" r="1.2" fill="#f6f6f6"/>
</g><path d="M190.8 104.1H196.4L193.60000000000002 107.19999999999999Z" fill="#000"/><rect x="206" y="93.5" width="1" height="24.0" fill="#cdc8b8"/><rect x="207" y="93.5" width="1" height="24.0" fill="#f4f4f4"/><g>
<path d="M224.6 103.4H235.8V112H224.6Z" fill="url(#gHouse)" stroke="#d08a28" stroke-width=".8"/>
<rect x="224.2" y="111.4" width="12" height="1" fill="#c87a20"/>
<rect x="228.4" y="106.2" width="3.6" height="5.6" fill="#a87a1c" stroke="#8a5c10" stroke-width=".6"/>
<path d="M222.4 105.2L230.1 97.4L237.9 105.2" fill="none" stroke="#b42a2c" stroke-width="2.1" stroke-linejoin="miter"/>
<path d="M225 104.2L230.1 99.2L235.2 104.2Z" fill="#fff3c0"/>
</g><g>
<rect x="249.5" y="95.5" width="89" height="20" fill="#ecece6" stroke="#c9c7ba"/>
<rect x="252" y="98" width="67.4" height="15" fill="#fff"/>
<rect x="253" y="98.8" width="23.6" height="13.2" fill="#e2e2e2"/>
<rect x="322" y="97" width="15" height="17" rx="2" fill="#e4e4da"/>
<path d="M325.4 103.4L329.6 107.8L333.8 103.4" fill="none" stroke="#c2c2b6" stroke-width="2"/>
</g><g>
<path d="M352.4 99V112.6H360M352.4 104.4H360M356 96.4H368.4M366 104.4H368.6M366 112.6H368.6" fill="none" stroke="#1a62a6" stroke-width="3"/>
<path d="M352.4 99V112.6H360M352.4 104.4H360M356 96.4H367.6" fill="none" stroke="#6cb0e0" stroke-width="1"/>
<rect x="349.5" y="93.5" width="6.4" height="6.2" fill="#fff" stroke="#1a62a6" stroke-width="1.2"/>
<rect x="359.6" y="101.4" width="6.4" height="6.2" fill="#fff" stroke="#1a62a6" stroke-width="1.2"/>
<rect x="359.6" y="109.6" width="6.4" height="6.2" fill="#fff" stroke="#1a62a6" stroke-width="1.2"/>
</g><rect x="380" y="93.5" width="1" height="24.0" fill="#cdc8b8"/><rect x="381" y="93.5" width="1" height="24.0" fill="#f4f4f4"/><path d="M396.4 98.4V111.6L412 105Z" fill="#cacaca" stroke="#b6b6b6" stroke-width=".9"/><path d="M419.8 104H425.40000000000003L422.6 107.1Z" fill="#9a9a9a"/><g>
<path d="M441 97.7L450.5 95.4L459 97.7L450 101.9Z" fill="url(#gCubeT)"/>
<path d="M441 97.7L450 101.9V113.6L442.4 108Z" fill="url(#gCubeL)"/>
<path d="M450 101.9L459 97.7L458 108L450 113.6Z" fill="url(#gCubeR)"/>
</g><g>
<path d="M480.2 97.7L489.7 93L498.3 97.3L488.5 102.2Z" fill="url(#gCubeT)"/>
<path d="M480.2 97.7L488.5 102.2V113.6L480.2 109Z" fill="url(#gCubeL)"/>
<path d="M488.5 102.2L498.3 97.3L497.8 109L488.5 113.6Z" fill="url(#gCubeR)"/>
<rect x="474.7" y="104.7" width="11" height="11" fill="url(#gGreen)" stroke="#5c5c5c" stroke-width="1"/>
</g><path d="M501.9 103.2H507.5L504.7 106.3Z" fill="#000"/><rect x="515.5" y="89.5" width="42.0" height="31" rx="3" fill="url(#gBtn)" stroke="#cdcdcd"/><path d="M515.5 118V92.5Q515.5 89.5 518.5 89.5H554.5" fill="none" stroke="#bdbdbd"/><rect x="545.3" y="90" width="1.3" height="30.4" fill="#c2c2c2"/><g>
<ellipse cx="531" cy="112.4" rx="6" ry="2" fill="#5e5e5e"/>
<ellipse cx="531" cy="111.6" rx="5" ry="1.4" fill="#8a8a8a"/>
<path d="M531 111L523.8 103.6L529.2 96" fill="none" stroke="#6a6a6a" stroke-width="2.4" stroke-linejoin="round"/>
<path d="M531 111L523.8 103.6L529.2 96" fill="none" stroke="#c8c8c8" stroke-width=".8" stroke-linejoin="round"/>
<path d="M528.8 95L531.2 94L540.6 98L535 106.8L531 101.6Z" fill="#9c9c9c" stroke="#5e5e5e" stroke-width=".7"/>
<ellipse cx="537.4" cy="102.6" rx="2.8" ry="4.8" transform="rotate(32 537.4 102.6)" fill="#f6d41c" stroke="#6a6a4a" stroke-width=".7"/>
<ellipse cx="536.4" cy="103.6" rx="1.4" ry="2.4" transform="rotate(32 536.4 103.6)" fill="#fff8c0"/>
<circle cx="529.4" cy="95.2" r="1.5" fill="#b8b8b8" stroke="#5e5e5e" stroke-width=".6"/>
</g><path d="M547.9 104.1H553.5L550.6999999999999 107.19999999999999Z" fill="#000"/><rect x="570.5" y="97.5" width="15.4" height="15.2" fill="#fff" stroke="#8c8c8c"/><path d="M593.9 102.9H599.5L596.6999999999999 106.0Z" fill="#000"/><g>
<rect x="14" y="105" width="14.4" height="18.4" fill="#b0b0b0"/>
<path d="M14 123.4H28.4V105" fill="none" stroke="#8a8a8a" stroke-width=".8"/>
<path d="M17.4 102H27.4L31.4 106V120.4H17.4Z" fill="#c2c2c2"/>
<path d="M27.4 102V106H31.4Z" fill="#e0e0e0"/>
<path d="M17.4 120.4H31.4V106" fill="none" stroke="#7c7c7c" stroke-width=".9"/>
<path d="M20 110.5H29M20 112.5H29M20 114.5H29M20 116.5H29" stroke="#9c9c9c" stroke-width=".9"/>
</g>
<g>
<path d="M14 147.4H27.4L31.4 151.4V167.4H14Z" fill="#b4b8c0"/>
<path d="M27.4 147.4V151.4H31.4Z" fill="#dcdfe4"/>
<path d="M14.4 167.2H31.2" stroke="#5c80a4" stroke-width=".9"/>
<path d="M24 155.5H29.6M24 157.5H29.6M24 159.5H29.6M18 161.5H29.6" stroke="#9aa0ac" stroke-width=".9"/>
<path d="M16.4 145.4H22.8V161.2L19.6 157.8L16.4 161.2Z" fill="url(#gRib)" stroke="#1c5a8a" stroke-width=".9"/>
</g><g>
<path d="M10.4 8.6H18L21.4 12V23.4H10.4Z" fill="#fbfbfb" stroke="#9a9a9a" stroke-width=".6"/>
<path d="M18 8.6V12H21.4Z" fill="#d8d8d8"/>
<path d="M10.4 23.6H21.6V12" fill="none" stroke="#4a4a5a" stroke-width=".8" opacity=".7"/>
<rect x="6" y="10" width="10" height="3.8" fill="#d01414"/>
<rect x="6" y="10" width="10" height="1.3" fill="#ee3a3a"/>
<path d="M11.6 21.6Q14.6 19.2 15.2 14.6Q15.4 13.2 14.9 14.8Q15 17.6 19.8 19.4Q17 18.4 11.6 21.6Z" fill="none" stroke="#e22020" stroke-width="1.1" stroke-linejoin="round"/>
</g><g aria-label="보기"><text x="254" y="110" font-family='"Liberation Sans","NanumGothic","Noto Sans CJK KR",sans-serif' font-size="12" fill="#000">보기</text></g><g aria-label="찾기"><text x="494" y="73" font-family='"Liberation Sans","NanumGothic","Noto Sans CJK KR",sans-serif' font-size="12" fill="#a4a494">찾기</text></g></svg>
<div class="a tx" style="left:222.6px;top:62px;">1</div>
<div class="a tx" style="left:246px;top:62px;">/</div>
<div class="a tx" style="left:255.5px;top:62px;">1</div>
<div class="a tx" style="left:341.5px;top:62px;">130%</div>

</body></html>
